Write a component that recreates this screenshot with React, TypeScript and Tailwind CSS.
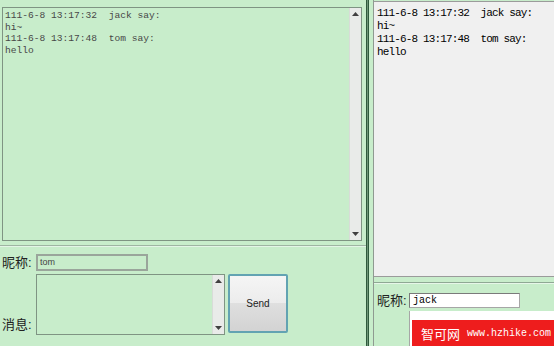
const mono = { fontFamily: '"Liberation Mono", "DejaVu Sans Mono", monospace' };

function UpArrow() {
  return (
    <svg width="7" height="4" viewBox="0 0 7 4">
      <path d="M0 4 L3.5 0 L7 4 Z" fill="#404040" />
    </svg>
  );
}

function DownArrow() {
  return (
    <svg width="7" height="4" viewBox="0 0 7 4">
      <path d="M0 0 L3.5 4 L7 0 Z" fill="#404040" />
    </svg>
  );
}

function ScrollBar() {
  return (
    <div className="w-[12px] h-full flex flex-col justify-between items-center py-[4px] bg-[#e9ebe9] border-l border-[#d8dcd8]">
      <UpArrow />
      <DownArrow />
    </div>
  );
}

const messages = [
  ["111-6-8 13:17:32  jack say:", "hi~"],
  ["111-6-8 13:17:48  tom say:", "hello"],
];

export default function App() {
  return (
    <div
      className="w-[554px] h-[346px] flex bg-[#c8edcb] overflow-hidden"
      style={{ fontFamily: '"Liberation Sans", "Noto Sans CJK SC", sans-serif' }}
    >
      {/* left window */}
      <div className="w-[366px] flex flex-col">
        <div className="ml-[2px] mt-[7px] w-[360px] h-[234px] border border-[#7f9483] flex">
          <div
            className="flex-1 pl-[2px] pt-[2px] text-[9.6px] leading-[11.67px] text-[#474747] whitespace-pre"
            style={mono}
          >
            {messages.flat().map((line, i) => (
              <div key={i}>{line}</div>
            ))}
          </div>
          <ScrollBar />
        </div>

        <div className="mt-[4px] h-[2px] border-t border-[#9fb5a3] border-b border-b-[#e4f5e6]" />

        <div className="mt-[6px] flex items-center">
          <span className="w-[36px] pl-[2px] text-[13px] text-[#222]">昵称:</span>
          <div className="w-[112px] h-[17px] border-2 border-[#9aa59b] flex items-center pl-[2px] text-[9px] text-[#444]">
            tom
          </div>
        </div>

        <div className="mt-[1px] flex">
          <span className="w-[36px] pl-[2px] self-end mb-[0px] text-[13px] text-[#222]">消息:</span>
          <div className="w-[189px] h-[61px] border border-[#7f9483] flex justify-end">
            <ScrollBar />
          </div>
          <button className="ml-[3px] w-[60px] h-[59px] border-2 border-[#62a3b2] rounded-[2px] flex flex-col overflow-hidden relative">
            <div className="h-1/2 w-full bg-gradient-to-b from-[#f5f5f5] to-[#ececec]" />
            <div className="h-1/2 w-full bg-gradient-to-b from-[#dfdfdf] to-[#d3d3d3]" />
            <span className="absolute inset-0 flex items-center justify-center text-[10px] text-[#222]">
              Send
            </span>
          </button>
        </div>
      </div>

      {/* divider */}
      <div className="w-[3px] bg-[#6f9678] border-x border-[#2f5a3d]" />

      {/* right window */}
      <div className="flex-1 pl-[4px]">
        <div className="h-full border-l border-[#8f9a91] flex flex-col relative">
          <div className="mt-[1px] h-[276px] shrink-0 bg-[#f0f0f0] border-t border-b border-[#9b9b9b] pl-[3px] pt-[5px]">
            <div className="text-[11px] leading-[13px] text-black whitespace-pre tracking-[-0.85px]" style={mono}>
              {messages.flat().map((line, i) => (
                <div key={i}>{line}</div>
              ))}
            </div>
          </div>

          <div className="mt-[5px] h-[2px] shrink-0 border-t border-[#8fa894] border-b border-b-[#e6f6e8]" />

          <div className="mt-[7px] flex items-center shrink-0">
            <span className="w-[35px] pl-[3px] text-[13px] text-[#222]">昵称:</span>
            <div
              className="w-[111px] h-[15px] bg-white border border-[#a6a6a6] border-t-[#7a7a7a] border-l-[#7a7a7a] pl-[3px] flex items-center text-[10px] text-black"
              style={mono}
            >
              jack
            </div>
          </div>

          <div className="ml-[35px] flex-1 bg-white border-l border-[#a6a6a6]" />

          <div className="absolute left-[38px] top-[320px] right-0 h-[26px] bg-[#ee1d1d] flex items-center pl-[9px] text-white whitespace-nowrap">
            <span className="text-[13px] leading-none" style={{ fontFamily: '"Noto Sans CJK SC", sans-serif' }}>
              智可网
            </span>
            <span className="ml-[7px] text-[10px]" style={mono}>
              www.hzhike.com
            </span>
          </div>
        </div>
      </div>
    </div>
  );
}
